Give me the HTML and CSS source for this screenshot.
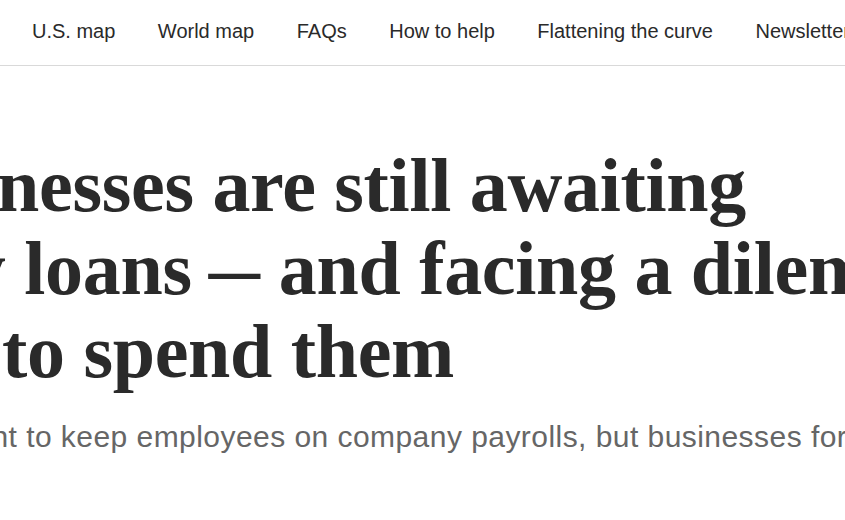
FILE: index.html
```html
<!DOCTYPE html>
<html lang="en">
<head>
<meta charset="utf-8">
<title>Coronavirus coverage</title>
<link rel="stylesheet" href="styles.css">
</head>
<body>
<nav class="topnav">
  <a class="topnav-item" href="#">U.S. map</a>
  <a class="topnav-item" href="#">World map</a>
  <a class="topnav-item" href="#">FAQs</a>
  <a class="topnav-item" href="#">How to help</a>
  <a class="topnav-item" href="#">Flattening the curve</a>
  <a class="topnav-item" href="#">Newsletter</a>
  <a class="topnav-item" href="#">Full coverage</a>
</nav>
<main class="article">
  <h1 class="headline">
    <span class="headline-line">Small businesses are still awaiting</span>
    <span class="headline-line headline-line--second">emergency loans <span class="dash">—</span> and facing a dilemma</span>
    <span class="headline-line headline-line--third">about how to spend them</span>
  </h1>
  <p class="dek">The federal loans are meant to keep employees on company payrolls, but businesses fortunate enough to get them are unsure how to use them.</p>
</main>
</body>
</html>
```

FILE: styles.css
```css
html, body {
  margin: 0;
  padding: 0;
  background: #fff;
  overflow: hidden;
}

body {
  width: 845px;
  height: 520px;
}

.topnav {
  display: flex;
  align-items: center;
  gap: 42.5px;
  height: 66px;
  padding-left: 32px;
  border-bottom: 1px solid #d9d9d9;
  white-space: nowrap;
  box-sizing: border-box;
  font-family: "Liberation Sans", Arial, sans-serif;
  font-size: 20px;
}

.topnav-item {
  color: #2a2a2a;
  text-decoration: none;
  flex: none;
  position: relative;
  top: -1px;
}

.article {
  margin-left: -340px;
  width: 1400px;
}

.headline {
  margin: 0;
  padding-top: 78px;
  font-family: "Liberation Serif", "Times New Roman", serif;
  font-weight: 700;
  font-size: 76px;
  line-height: 83px;
  color: #2a2a2a;
  letter-spacing: -0.3px;
}

.headline-line {
  display: block;
  white-space: nowrap;
}

.headline-line--second {
  text-indent: -2px;
}

.headline-line--third {
  text-indent: -14px;
}

.dash {
  display: inline-block;
  transform: scaleX(0.68);
  margin: 0 -12px;
}

.dek {
  margin: 27px 0 0;
  white-space: nowrap;
  text-indent: -30px;
  font-family: "Liberation Sans", Arial, sans-serif;
  font-size: 30px;
  letter-spacing: 0.45px;
  color: #666;
}
```
